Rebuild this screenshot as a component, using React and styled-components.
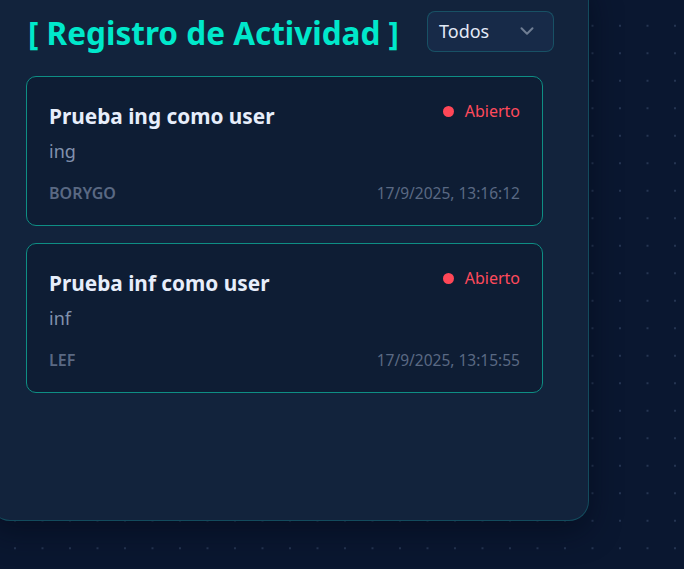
import React from "react";
import styled, { createGlobalStyle } from "styled-components";
import { ChevronDown } from "lucide-react";

const Global = createGlobalStyle`
  html, body { margin: 0; padding: 0; }
  body {
    width: 684px;
    height: 569px;
    overflow: hidden;
    background-color: #0a1730;
    background-image: radial-gradient(circle, rgba(60, 78, 110, 0.55) 0.9px, transparent 1.4px);
    background-size: 27.5px 27.5px;
    background-position: 1.25px 12px;
    font-family: "Segoe UI", "Noto Sans", "Open Sans", sans-serif;
  }
`;

const Page = styled.div`
  display: flex;
  align-items: flex-start;
`;

const Panel = styled.section`
  box-sizing: border-box;
  width: 599px;
  height: 541px;
  margin: -20px 0 0 -10px;
  padding: 29px 34px 0 35px;
  background: #12233c;
  border: 1px solid rgba(20, 110, 120, 0.55);
  border-radius: 20px;
  box-shadow: 0 10px 30px rgba(3, 10, 24, 0.55);
  display: flex;
  flex-direction: column;
`;

const Header = styled.header`
  display: flex;
  align-items: center;
  justify-content: space-between;
  height: 42px;
`;

const Title = styled.h2`
  margin: 0;
  font-size: 31.5px;
  font-weight: 700;
  color: #00e8cb;
  line-height: 42px;
  position: relative;
  top: 2px;
  left: 2px;
`;

const Select = styled.button`
  box-sizing: border-box;
  width: 127px;
  height: 41px;
  display: flex;
  align-items: center;
  justify-content: space-between;
  padding: 0 15px 0 11px;
  background: #172a48;
  border: 1px solid rgba(25, 120, 130, 0.5);
  border-radius: 8px;
  color: #e2e9f6;
  font-family: inherit;
  font-size: 18px;
  cursor: pointer;
  svg { color: #6f7d93; }
`;

const List = styled.div`
  display: flex;
  flex-direction: column;
  gap: 17px;
  margin-top: 24px;
  margin-right: 11px;
`;

const Card = styled.article`
  box-sizing: border-box;
  height: 150px;
  padding: 22px 22px 0 22px;
  background: #0e1d34;
  border: 1px solid #0e8e84;
  border-radius: 10px;
  display: flex;
  flex-direction: column;
`;

const Row = styled.div`
  display: flex;
  justify-content: space-between;
  align-items: ${(p) => p.$align || "center"};
`;

const CardTitle = styled.h3`
  margin: 3px 0 0;
  font-size: 20.8px;
  font-weight: 700;
  color: #e7eefb;
  line-height: 28px;
`;

const Status = styled.span`
  display: flex;
  align-items: center;
  gap: 11px;
  margin-top: 1px;
  font-size: 16px;
  line-height: 22px;
  color: #ff4a5c;
  &::before {
    content: "";
    width: 11px;
    height: 11px;
    border-radius: 50%;
    background: #ff4757;
  }
`;

const Body = styled.p`
  margin: 8px 0 0;
  font-size: 18px;
  line-height: 26px;
  color: #8191ad;
`;

const Meta = styled.span`
  font-size: ${(p) => (p.$strong ? "16px" : "15.5px")};
  line-height: 22px;
  color: #5a6983;
  font-weight: ${(p) => (p.$strong ? 600 : 400)};
`;

const Footer = styled(Row)`
  margin-top: 18px;
`;

const items = [
  { title: "Prueba ing como user", body: "ing", user: "BORYGO", date: "17/9/2025, 13:16:12" },
  { title: "Prueba inf como user", body: "inf", user: "LEF", date: "17/9/2025, 13:15:55" },
];

export default function App() {
  return (
    <>
      <Global />
      <Page>
        <Panel>
          <Header>
            <Title>[ Registro de Actividad ]</Title>
            <Select>
              Todos
              <ChevronDown size={22} strokeWidth={2.2} />
            </Select>
          </Header>
          <List>
            {items.map((it) => (
              <Card key={it.title}>
                <Row $align="flex-start">
                  <CardTitle>{it.title}</CardTitle>
                  <Status>Abierto</Status>
                </Row>
                <Body>{it.body}</Body>
                <Footer>
                  <Meta $strong>{it.user}</Meta>
                  <Meta>{it.date}</Meta>
                </Footer>
              </Card>
            ))}
          </List>
        </Panel>
      </Page>
    </>
  );
}
